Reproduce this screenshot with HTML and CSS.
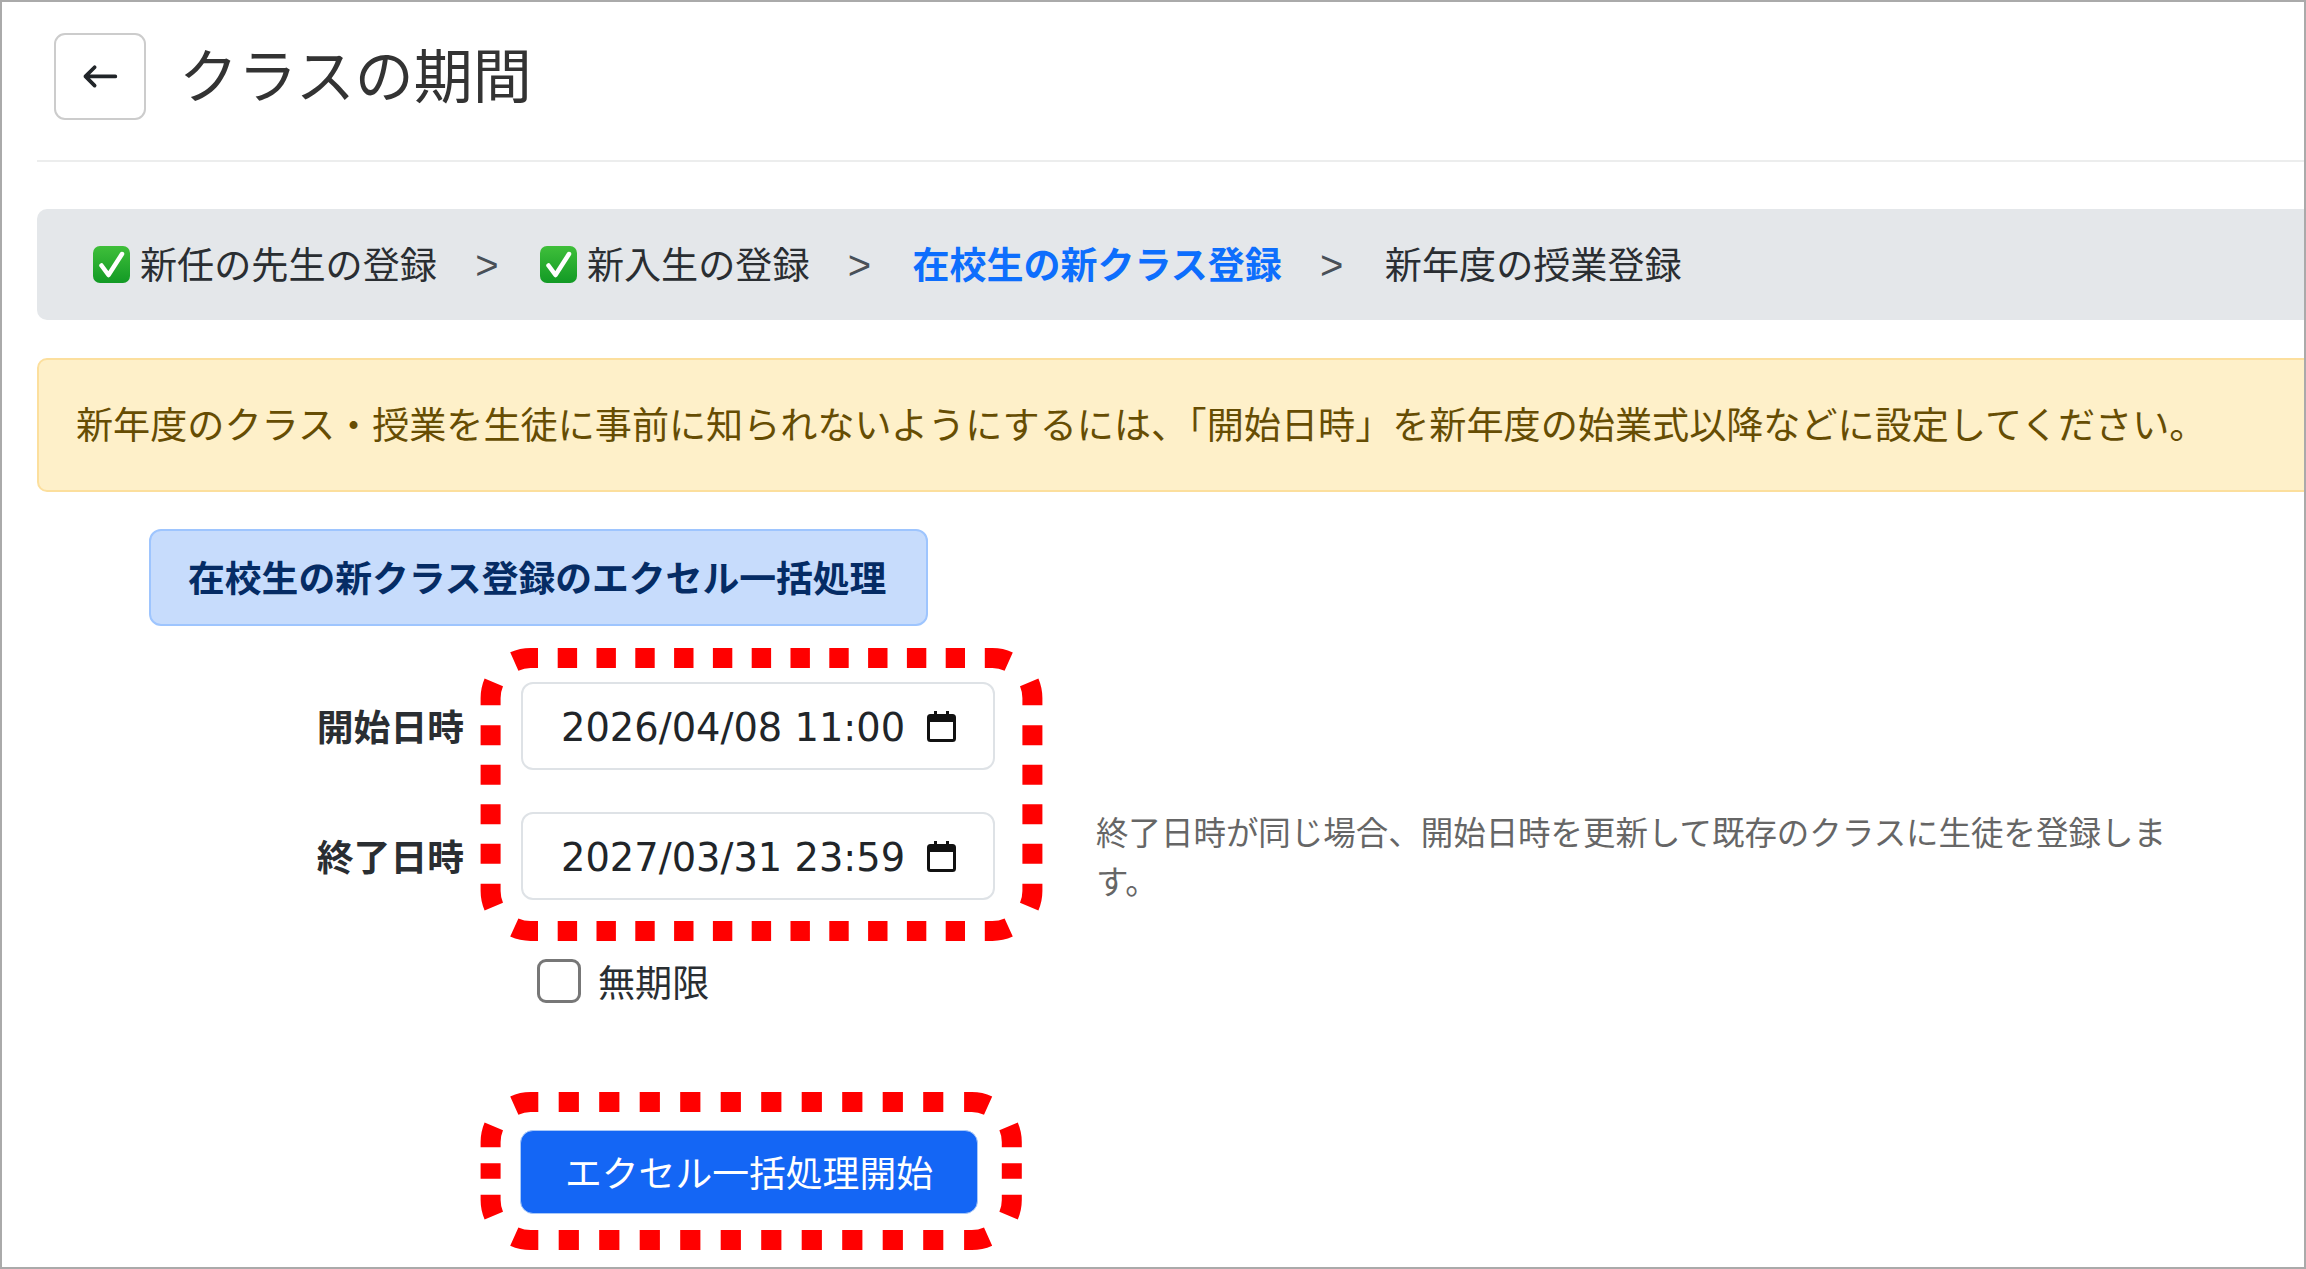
FILE: index.html
```html
<!DOCTYPE html>
<html lang="ja">
<head>
<meta charset="utf-8">
<title>クラスの期間</title>
<link rel="stylesheet" href="styles.css">
</head>
<body>
<div class="frame">
  <header class="page-head">
    <button class="back" type="button" aria-label="戻る">
      <svg class="back-icon" viewBox="0 0 16 16"><path d="M15 8a.5.5 0 0 0-.5-.5H2.707l3.147-3.146a.5.5 0 1 0-.708-.708l-4 4a.5.5 0 0 0 0 .708l4 4a.5.5 0 0 0 .708-.708L2.707 8.5H14.5A.5.5 0 0 0 15 8z"/></svg>
    </button>
    <h1 class="title">クラスの期間</h1>
  </header>

  <nav class="crumbs">
    <svg class="check" viewBox="0 0 37 37"><defs><linearGradient id="g" x1="0" y1="0" x2="0" y2="1"><stop offset="0" stop-color="#3fbf3a"/><stop offset="1" stop-color="#129a25"/></linearGradient></defs><rect x="0" y="0" width="37" height="37" rx="7" fill="url(#g)"/><path class="check-mark" d="M8.5 19.5 15.5 29 29 8"/></svg>
    <span class="crumb">新任の先生の登録</span>
    <span class="sep">&gt;</span>
    <svg class="check" viewBox="0 0 37 37"><rect x="0" y="0" width="37" height="37" rx="7" fill="url(#g)"/><path class="check-mark" d="M8.5 19.5 15.5 29 29 8"/></svg>
    <span class="crumb">新入生の登録</span>
    <span class="sep">&gt;</span>
    <a class="crumb current" href="#">在校生の新クラス登録</a>
    <span class="sep">&gt;</span>
    <span class="crumb">新年度の授業登録</span>
  </nav>

  <div class="alert">新年度のクラス・授業を生徒に事前に知られないようにするには、「開始日時」を新年度の始業式以降などに設定してください。</div>

  <main class="content">
    <div class="bulk-title">在校生の新クラス登録のエクセル一括処理</div>
    <div class="form-grid">
      <label class="field-label">開始日時</label>
      <div class="date-field">
        <span>2026/04/08 11:00</span>
        <svg class="cal" viewBox="0 0 29 31"><path d="M7 0h3v4H7zM19 0h3v4h-3z"/><path fill-rule="evenodd" d="M3.5 3h22A3.5 3.5 0 0 1 29 6.500v21a3.500 3.500 0 0 1-3.500 3.500h-22A3.500 3.500 0 0 1 0 27.500v-21A3.500 3.500 0 0 1 3.500 3zM3 11v16.500a.5.5 0 0 0 .5.5h22a.5.5 0 0 0 .5-.5V11z"/></svg>
      </div>
      <span></span>
      <label class="field-label">終了日時</label>
      <div class="date-field">
        <span>2027/03/31 23:59</span>
        <svg class="cal" viewBox="0 0 29 31"><path d="M7 0h3v4H7zM19 0h3v4h-3z"/><path fill-rule="evenodd" d="M3.5 3h22A3.5 3.5 0 0 1 29 6.500v21a3.500 3.500 0 0 1-3.500 3.500h-22A3.500 3.500 0 0 1 0 27.500v-21A3.500 3.500 0 0 1 3.500 3zM3 11v16.500a.5.5 0 0 0 .5.5h22a.5.5 0 0 0 .5-.5V11z"/></svg>
      </div>
      <p class="help">終了日時が同じ場合、開始日時を更新して既存のクラスに生徒を登録します。</p>
      <div class="no-limit">
        <span class="box"></span>
        <span class="no-limit-text">無期限</span>
      </div>
      <button class="start" type="button">エクセル一括処理開始</button>
    </div>
  </main>

  <svg class="marks" width="2306" height="1269" viewBox="0 0 2306 1269" aria-hidden="true">
    <path class="mark" d="M514.3 661.5A40 40 0 0 1 530.6 658H538M493.800 682.400A40 40 0 0 0 490.600 698V705.300M1008.700 661.500A40 40 0 0 0 992.400 658H984.800M1029.200 682.400A40 40 0 0 1 1032.400 698V705.300M514.300 927.500A40 40 0 0 0 530.600 931H538M493.800 906.600A40 40 0 0 1 490.600 891V883.700M1008.700 927.500A40 40 0 0 1 992.400 931H984.800M1029.200 906.600A40 40 0 0 0 1032.400 891V883.700"/>
    <path class="mark dash-a" d="M557.700 658H965M557.700 931H965"/>
    <path class="mark dash-b" d="M490.600 725.300V863.700M1032.400 725.300V863.700"/>
    <path class="mark" d="M514.300 1105.500A40 40 0 0 1 530.600 1102H538.300M493.800 1126.400A40 40 0 0 0 490.600 1142V1147.300M988.100 1105.500A40 40 0 0 0 971.800 1102H964.100M1008.600 1126.400A40 40 0 0 1 1011.800 1142V1147.300M514.300 1236.500A40 40 0 0 0 530.600 1240H538.300M493.800 1215.600A40 40 0 0 1 490.600 1200V1194.700M988.100 1236.500A40 40 0 0 1 971.800 1240H964.100M1008.600 1215.600A40 40 0 0 0 1011.800 1200V1194.700"/>
    <path class="mark dash-c" d="M558.700 1102H943.300M558.700 1240H943.300"/>
    <path class="mark" d="M490.600 1163.300V1178.700M1011.800 1163.300V1178.700"/>
  </svg>
</div>
</body>
</html>
```
FILE: styles.css
```css
* { box-sizing: border-box; }
html, body { margin: 0; padding: 0; background: #fff; }
body {
  font-family: "Noto Sans CJK JP", "Noto Sans", sans-serif;
  font-size: 37.12px;
  line-height: 1.5;
  color: #2a2e32;
}
.frame {
  position: relative;
  width: 2306px;
  height: 1269px;
  overflow: hidden;
  border: 2px solid #aaa;
  padding: 31px 0 0 35px;
}
.page-head {
  display: flex;
  align-items: center;
  height: 129px;
  padding: 0 0 40px 17px;
  border-bottom: 2px solid #eceded;
}
.back {
  width: 92px;
  height: 87px;
  padding: 0;
  display: flex;
  align-items: center;
  justify-content: center;
  background: #fff;
  border: 2px solid #ccc;
  border-radius: 11px;
}
.back-icon {
  width: 36.8px;
  height: 36.8px;
  fill: #212529;
  stroke: #212529;
  stroke-width: .6;
  stroke-linejoin: round;
}
.title {
  margin: 0 0 6px 33px;
  font-size: 59px;
  font-weight: 400;
  line-height: 1.2;
  color: #333;
}
.crumbs {
  display: flex;
  align-items: center;
  height: 111px;
  margin: 47px -20px 0 0;
  padding: 0 0 2px 56px;
  background: #e4e7ea;
  border-radius: 10px;
}
.check { width: 37px; height: 37px; margin: 2px 10px 0 0; flex: none; }
.check-mark { fill: none; stroke: #fff; stroke-width: 4.5; stroke-linecap: round; stroke-linejoin: round; }
.crumb { white-space: nowrap; }
.current { color: #0d6efd; font-weight: 700; font-size: 37px; text-decoration: none; }
.sep {
  width: 24px;
  margin: 2px 41px 0 38px;
  text-align: center;
  color: #495057;
  font-family: "Liberation Sans", sans-serif;
  font-size: 40px;
}
.alert {
  margin: 38px -20px 0 0;
  padding: 36px 37px 0;
  background: #fef0c9;
  border: 2px solid #fcdf9d;
  border-radius: 10px;
  color: #664d03;
  white-space: nowrap;
  height: 134px;
}
.content { margin-left: 112px; }
.bulk-title {
  width: 779px;
  height: 97px;
  margin-top: 37px;
  padding: 18px 37px 0;
  background: #c7dcfc;
  border: 2px solid #9ec5fe;
  border-radius: 12px;
  color: #052c65;
  font-size: 36.8px;
  font-weight: 700;
  white-space: nowrap;
}
.form-grid {
  display: grid;
  grid-template-columns: 315px 474px 1129px;
  grid-template-rows: 88px 88px auto auto;
  column-gap: 57px;
  row-gap: 42px;
  margin-top: 56px;
}
.field-label {
  align-self: center;
  text-align: right;
  font-size: 36.8px;
  font-weight: 700;
}
.date-field {
  display: flex;
  align-items: center;
  justify-content: space-between;
  padding: 3px 37px 0 38px;
  background: #fff;
  border: 2px solid #dee2e6;
  border-radius: 12px;
  font-family: "DejaVu Sans", sans-serif;
  font-size: 38.4px;
  white-space: nowrap;
  color: #212529;
}
.cal { width: 29px; height: 31px; margin-top: -3px; fill: #111; flex: none; }
.help {
  align-self: center;
  margin: 0 0 0 44px;
  font-size: 32.48px;
  line-height: 1.5;
  color: #666;
}
.no-limit {
  grid-column: 2;
  display: flex;
  align-items: center;
  margin: 17px 0 0 16px;
  height: 44px;
}
.no-limit-text { padding-top: 2px; }
.box {
  width: 44px;
  height: 44px;
  margin-right: 17px;
  background: #fff;
  border: 3px solid #777;
  border-radius: 9px;
}
.start {
  grid-column: 2 / span 2;
  justify-self: start;
  width: 458px;
  height: 84px;
  margin: 85px 0 0 -1px;
  padding: 0;
  background: #1466f5;
  border: 1px solid #a8c8f8;
  border-radius: 13px;
  color: #fff;
  font: inherit;
  font-size: 36.8px;
}
.marks { position: absolute; top: -2px; left: -2px; pointer-events: none; }
.mark { fill: none; stroke: #f00; stroke-width: 20; }
.dash-a { stroke-dasharray: 19.4 19.4; }
.dash-b { stroke-dasharray: 20 19.47; }
.dash-c { stroke-dasharray: 20.2 20.3; }
```
